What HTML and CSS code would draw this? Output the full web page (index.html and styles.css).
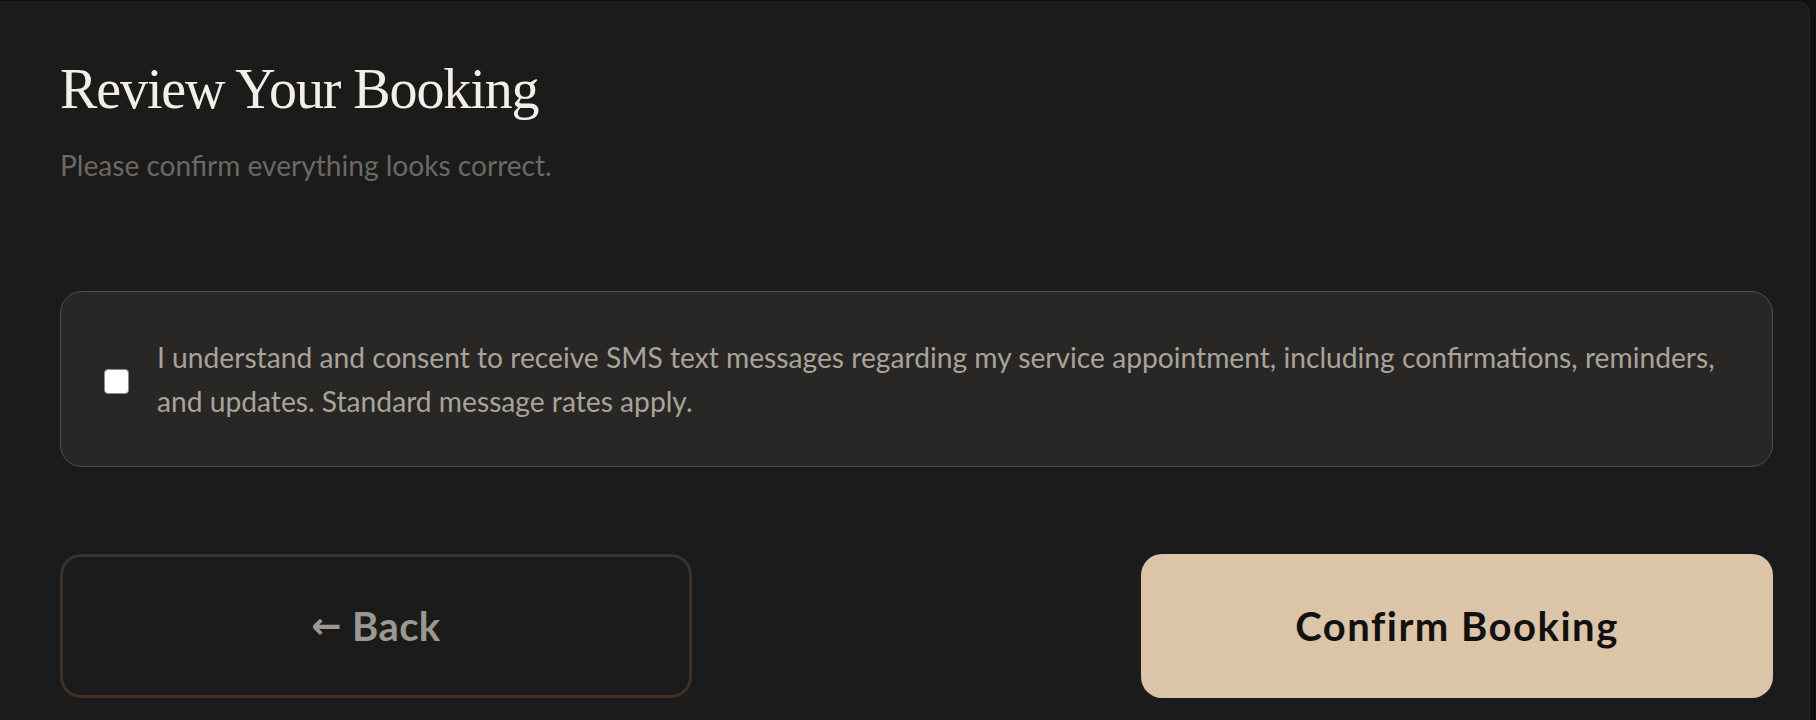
FILE: index.html
```html
<!DOCTYPE html>
<html lang="en">
<head>
<meta charset="utf-8">
<title>Review Your Booking</title>
<link rel="stylesheet" href="styles.css">
</head>
<body>
<div class="page">
  <section class="card">
    <h1 class="title">Review Your Booking</h1>
    <p class="subtitle">Please confirm everything looks correct.</p>

    <label class="consent">
      <input type="checkbox" class="consent-check">
      <span class="consent-text">I understand and consent to receive SMS text messages regarding my service appointment, including confirmations, reminders, and updates. Standard message rates apply.</span>
    </label>

    <div class="actions">
      <button class="btn btn-back" type="button"><span class="arrow">←</span> Back</button>
      <button class="btn btn-confirm" type="button">Confirm Booking</button>
    </div>
  </section>
</div>
</body>
</html>
```

FILE: styles.css
```css
* {
  box-sizing: border-box;
}

html, body {
  margin: 0;
  padding: 0;
  background: #111111;
  height: 100%;
  overflow: hidden;
}

.page {
  padding: 2px 6px 0 0;
}

.card {
  margin-left: -12px;
  background: #1b1b1b;
  border: 1px solid #252525;
  border-radius: 10px;
  padding: 53px 36px 40px 71px;
  min-height: 760px;
}

.title {
  margin: 0;
  font-family: "Liberation Serif", "DejaVu Serif", serif;
  font-weight: 400;
  font-size: 56px;
  line-height: 67px;
  letter-spacing: -1.1px;
  color: #f3eee6;
}

.subtitle {
  margin: 21px 0 0;
  font-family: Lato, "Noto Sans", sans-serif;
  font-size: 28.1px;
  line-height: 43px;
  color: #6c6863;
}

.consent {
  margin-top: 104px;
  display: flex;
  align-items: center;
  gap: 28px;
  background: #282725;
  border: 1.5px solid #544d43;
  border-radius: 22px;
  padding: 43px 40px 43px 43px;
  cursor: pointer;
}

.consent-check {
  appearance: none;
  -webkit-appearance: none;
  flex: 0 0 auto;
  width: 25px;
  height: 25px;
  margin: 4px 0 0;
  background: #ffffff;
  border: 1.5px solid #8d8d8d;
  border-radius: 4px;
}

.consent-text {
  font-family: Lato, "Noto Sans", sans-serif;
  font-size: 28.2px;
  line-height: 44px;
  color: #a8a39b;
}

.actions {
  margin-top: 87px;
  display: flex;
  justify-content: space-between;
}

.btn {
  width: 632px;
  height: 144px;
  border-radius: 21px;
  font-family: Lato, "Noto Sans", sans-serif;
  font-weight: 700;
  font-size: 40px;
  letter-spacing: 1.5px;
  cursor: pointer;
}

.btn-back {
  background: transparent;
  border: 3px solid #3d3128;
  color: #9c9790;
  letter-spacing: 0.4px;
}

.arrow {
  display: inline-block;
  font-family: "DejaVu Sans", sans-serif;
  font-size: 36px;
  font-weight: 700;
  transform: translateY(-3px);
}

.btn-confirm {
  background: #dbc4a8;
  border: none;
  color: #121110;
}
```
